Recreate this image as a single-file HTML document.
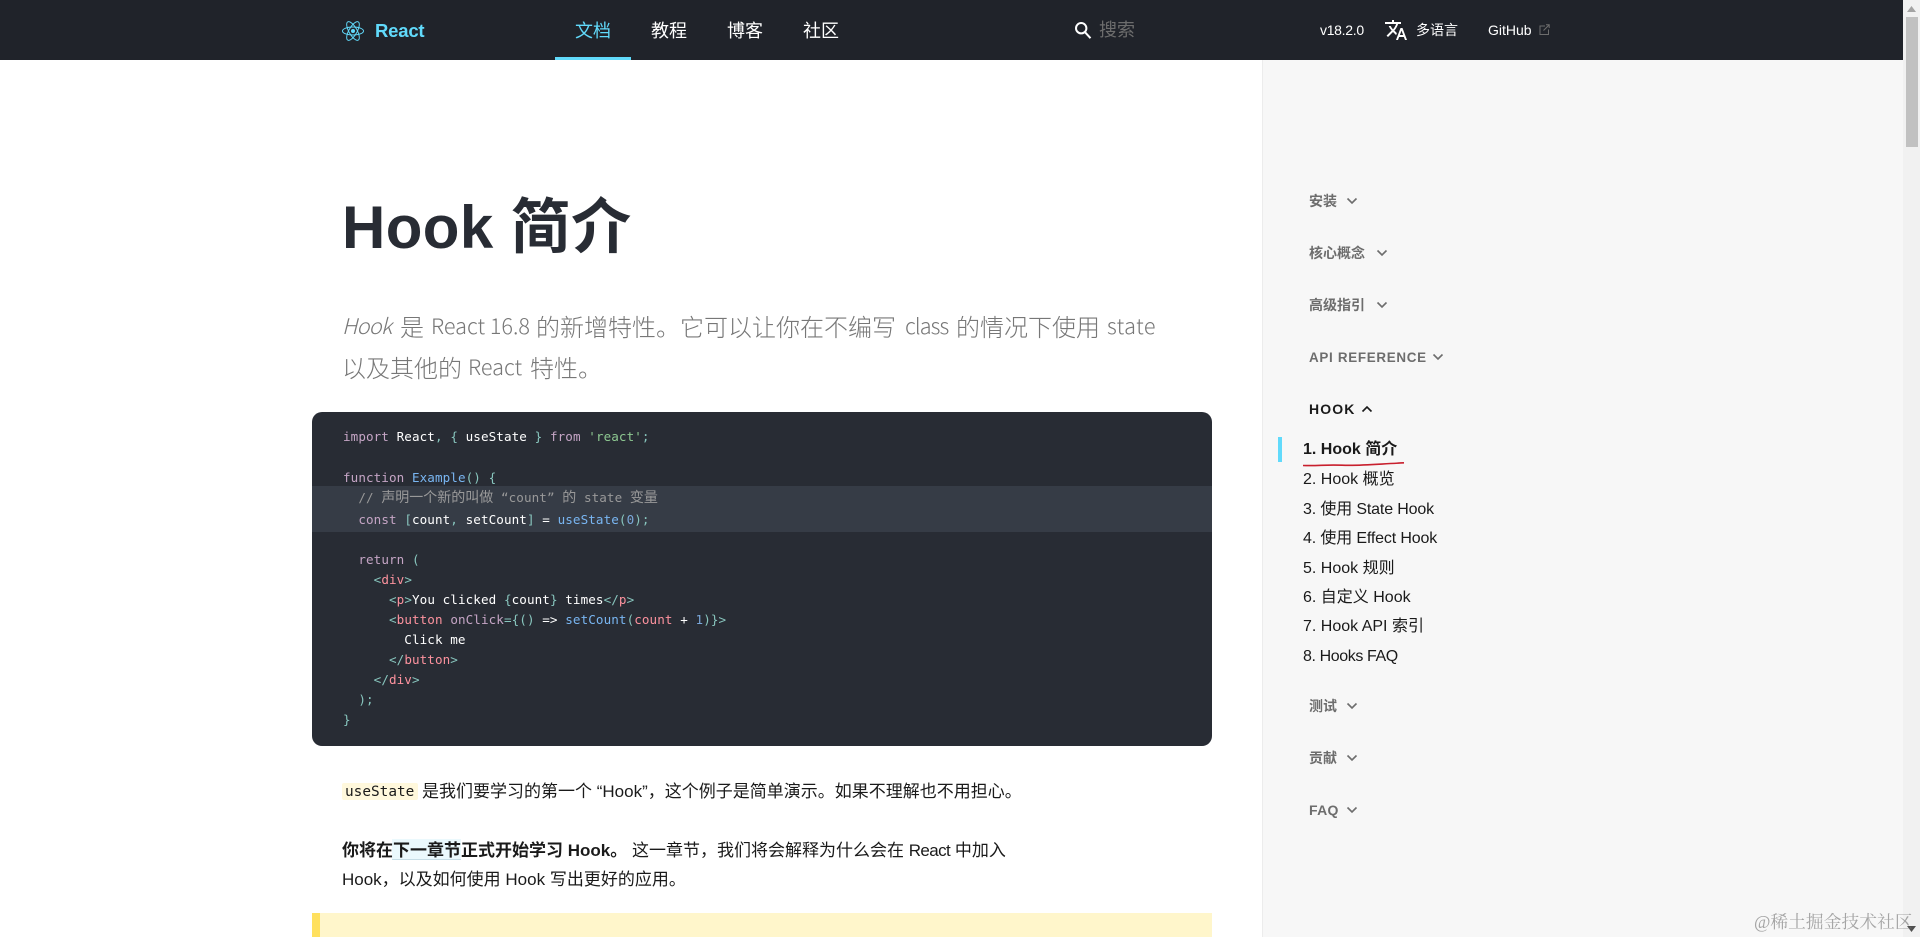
<!DOCTYPE html>
<html lang="zh-CN">
<head>
<meta charset="utf-8">
<title>Hook 简介 – React</title>
<style>
html,body{margin:0;padding:0;width:1920px;height:937px;overflow:hidden;background:#fff}
body{position:relative;font-family:"Liberation Sans","Noto Sans CJK SC",sans-serif;color:#1a1a1a}
.t{position:absolute;white-space:nowrap;line-height:30px;height:30px}
.nav{font-size:18px;color:#fff}
.s{font-size:14px;font-weight:700;color:#6d6d6d}
.i{font-size:16px;color:#1a1a1a;left:1303px}
.lead{font-family:"Noto Sans CJK SC","Liberation Sans",sans-serif;font-size:24px;font-weight:300;color:#777}
.ll{font-size:21.600px}
.c{position:absolute;left:343px;white-space:pre;line-height:20px;height:20px;font-family:"DejaVu Sans Mono","Liberation Mono","Noto Sans CJK SC",monospace;font-size:12.6px;letter-spacing:.08px;color:#fff}
.c .z{font-family:"Noto Sans CJK SC",sans-serif;font-size:14px;letter-spacing:0}
.k{color:#c5a5c5}.p{color:#88c6be}.g{color:#8dc891}.f{color:#79b6f2}.m{color:#999}.r{color:#fc929e}.n{color:#7aa7d9}
svg{position:absolute;display:block}
.chev{fill:none;stroke:#6d6d6d;stroke-width:1.6}
</style>
</head>
<body>
<!-- main regions -->
<div style="position:absolute;left:1262px;top:60px;width:641px;height:877px;background:#f7f7f7;border-left:1px solid #ececec;box-sizing:border-box"></div>
<div style="position:absolute;left:0;top:0;width:1903px;height:60px;background:#20232a"></div>

<!-- scrollbar -->
<div style="position:absolute;left:1903px;top:0;width:17px;height:937px;background:#f1f1f1"></div>
<div style="position:absolute;left:1906px;top:17px;width:12px;height:130px;background:#c1c1c1"></div>
<svg style="left:1906px;top:5px" width="11" height="8"><path d="M5.500 1L10 7H1z" fill="#a3a3a3"/></svg>
<svg style="left:1906px;top:925px" width="11" height="8"><path d="M5.500 7L10 1H1z" fill="#505050"/></svg>

<!-- header -->
<svg style="left:342px;top:20px" width="22" height="22" viewBox="-11.500 -11.500 23 23" fill="none" stroke="#61dafb" stroke-width="1">
<circle r="2.100" fill="#61dafb" stroke="none"/>
<ellipse rx="11" ry="4.200"/><ellipse rx="11" ry="4.200" transform="rotate(60)"/><ellipse rx="11" ry="4.200" transform="rotate(120)"/>
</svg>
<div class="t" style="left:375px;top:16px;font-size:18.500px;font-weight:700;letter-spacing:-.2px;color:#61dafb">React</div>
<div class="t nav" style="left:575px;top:16px;color:#61dafb">文档</div>
<div class="t nav" style="left:651px;top:16px">教程</div>
<div class="t nav" style="left:727px;top:16px">博客</div>
<div class="t nav" style="left:803px;top:16px">社区</div>
<div style="position:absolute;left:555px;top:57px;width:76px;height:3px;background:#61dafb"></div>
<svg style="left:1074px;top:21px" width="18" height="18" viewBox="0 0 18 18" fill="none" stroke="#fff" stroke-width="2"><circle cx="7.200" cy="7.200" r="5.200"/><path d="M11 11.200l5.500 6"/></svg>
<div class="t" style="left:1099px;top:15px;font-size:18px;color:#6d6d6d">搜索</div>
<div class="t" style="left:1320px;top:15px;font-size:14px;letter-spacing:-.3px;color:#fff">v18.2.0</div>
<svg style="left:1384px;top:18px" width="24" height="24" viewBox="0 0 24 24" fill="#fff"><path d="M12.870 15.070l-2.540-2.510.03-.03c1.740-1.940 2.980-4.170 3.710-6.530H17V4h-7V2H8v2H1v1.990h11.170C11.500 7.920 10.440 9.750 9 11.350 8.070 10.320 7.300 9.190 6.690 8h-2c.73 1.630 1.730 3.170 2.980 4.560l-5.090 5.020L4 19l5-5 3.110 3.110.76-2.040zM18.500 10h-2L12 22h2l1.120-3h4.750L21 22h2l-4.500-12zm-2.620 7l1.620-4.330L19.120 17h-3.240z"/></svg>
<div class="t" style="left:1416px;top:15px;font-size:14px;color:#fff">多语言</div>
<div class="t" style="left:1488px;top:15px;font-size:14px;color:#fff">GitHub</div>
<svg style="left:1539px;top:24px" width="11" height="11" viewBox="0 0 11 11" fill="none" stroke="#6d6d6d" stroke-width="1"><path d="M6 2H1v8.500h8.500V5.500"/><path d="M4.500 6.500L10 1M7 .8h3.200V4"/></svg>

<!-- title and lead -->
<div class="t" style="left:342px;top:193px;font-size:60px;line-height:70px;height:70px;font-weight:700;letter-spacing:.4px;color:#282c34">Hook 简介</div>
<div class="t lead ll" style="left:342px;top:311px;letter-spacing:-.7px"><i>Hook</i></div>
<div class="t lead" style="left:400px;top:311px">是</div>
<div class="t lead ll" style="left:431px;top:311px">React 16.8</div>
<div class="t lead" style="left:536px;top:311px">的新增特性。它可以让你在不编写</div>
<div class="t lead ll" style="left:905px;top:311px;letter-spacing:-.9px">class</div>
<div class="t lead" style="left:956px;top:311px">的情况下使用</div>
<div class="t lead ll" style="left:1107px;top:311px;letter-spacing:.4px">state</div>
<div class="t lead" style="left:342px;top:352px">以及其他的</div>
<div class="t lead ll" style="left:468px;top:352px">React</div>
<div class="t lead" style="left:530px;top:352px">特性。</div>

<!-- code -->
<div style="position:absolute;left:312px;top:412px;width:900px;height:334px;background:#282c34;border-radius:10px"></div>
<div style="position:absolute;left:312px;top:486px;width:900px;height:46px;background:#363c46"></div>
<div class="c" style="top:427px"><span class="k">import</span> React<span class="p">,</span> <span class="p">{</span> useState <span class="p">}</span> <span class="k">from</span> <span class="g">'react'</span><span class="p">;</span></div>
<div class="c" style="top:468px"><span class="k">function</span> <span class="f">Example</span><span class="p">()</span> <span class="p">{</span></div>
<div class="c m" style="top:487px;color:#999">  // <span class="z">声明一个新的叫做</span> “count” <span class="z">的</span> state <span class="z">变量</span></div>
<div class="c" style="top:510px">  <span class="k">const</span> <span class="p">[</span>count<span class="p">,</span> setCount<span class="p">]</span> = <span class="f">useState</span><span class="p">(</span><span class="n">0</span><span class="p">);</span></div>
<div class="c" style="top:550px">  <span class="k">return</span> <span class="p">(</span></div>
<div class="c" style="top:570px">    <span class="p">&lt;</span><span class="r">div</span><span class="p">&gt;</span></div>
<div class="c" style="top:590px">      <span class="p">&lt;</span><span class="r">p</span><span class="p">&gt;</span>You clicked <span class="p">{</span>count<span class="p">}</span> times<span class="p">&lt;/</span><span class="r">p</span><span class="p">&gt;</span></div>
<div class="c" style="top:610px">      <span class="p">&lt;</span><span class="r">button</span> <span class="k">onClick</span><span class="p">={()</span> =&gt; <span class="f">setCount</span><span class="p">(</span><span class="r">count</span> + <span class="n">1</span><span class="p">)}&gt;</span></div>
<div class="c" style="top:630px">        Click me</div>
<div class="c" style="top:650px">      <span class="p">&lt;/</span><span class="r">button</span><span class="p">&gt;</span></div>
<div class="c" style="top:670px">    <span class="p">&lt;/</span><span class="r">div</span><span class="p">&gt;</span></div>
<div class="c" style="top:690px">  <span class="p">);</span></div>
<div class="c" style="top:710px"><span class="p">}</span></div>

<!-- paragraphs -->
<div style="position:absolute;left:342px;top:783px;width:76px;height:17px;background:#fff8dc;border-radius:2px"></div>
<div class="c" style="left:345px;top:782px;color:#1a1a1a;font-size:14.400px;letter-spacing:0">useState</div>
<div class="t" style="left:422px;top:777px;font-size:17px">是我们要学习的第一个 “Hook”，这个例子是简单演示。如果不理解也不用担心。</div>
<div style="position:absolute;left:392px;top:839px;width:69px;height:21px;background:#ebf9fd;border-bottom:1px solid #c6dde6;box-sizing:border-box"></div>
<div class="t" style="left:342px;top:836px;font-size:17px"><b>你将在下一章节正式开始学习 Hook。</b> 这一章节，我们将会解释为什么会在 <span style="letter-spacing:-.6px">React</span> 中加入</div>
<div class="t" style="left:342px;top:865px;font-size:17px">Hook，以及如何使用 Hook 写出更好的应用。</div>
<div style="position:absolute;left:312px;top:913px;width:900px;height:24px;background:#fff6cb;border-left:8px solid #ffe05e;box-sizing:border-box"></div>

<!-- sidebar -->
<div class="t s" style="left:1309px;top:186px">安装</div>
<svg style="left:1346px;top:197px" width="12" height="8"><path class="chev" d="M1.500 1.500L6 6l4.500-4.500"/></svg>
<div class="t s" style="left:1309px;top:238px">核心概念</div>
<svg style="left:1376px;top:249px" width="12" height="8"><path class="chev" d="M1.500 1.500L6 6l4.500-4.500"/></svg>
<div class="t s" style="left:1309px;top:290px">高级指引</div>
<svg style="left:1376px;top:301px" width="12" height="8"><path class="chev" d="M1.500 1.500L6 6l4.500-4.500"/></svg>
<div class="t s" style="left:1309px;top:343px;font-size:13.400px;letter-spacing:.7px">API REFERENCE</div>
<svg style="left:1432px;top:353px" width="12" height="8"><path class="chev" d="M1.500 1.500L6 6l4.500-4.500"/></svg>
<div class="t s" style="left:1309px;top:394px;letter-spacing:1.100px;color:#1a1a1a">HOOK</div>
<svg style="left:1361px;top:405px" width="12" height="8"><path class="chev" style="stroke:#1a1a1a" d="M1.500 6.500L6 2l4.500 4.500"/></svg>
<div style="position:absolute;left:1278px;top:437px;width:4px;height:25px;background:#61dafb"></div>
<div class="t i" style="top:435px;font-weight:700">1. Hook 简介</div>
<svg style="left:1302px;top:460px" width="103" height="7"><path d="M1 5.500C18 6 22 4.500 40 5.200S70 4.500 102 2.800" fill="none" stroke="#c81f2d" stroke-width="1.600"/></svg>
<div class="t i" style="top:465px">2. Hook 概览</div>
<div class="t i" style="top:495px;letter-spacing:-.15px">3. 使用 State Hook</div>
<div class="t i" style="top:524px;letter-spacing:-.15px">4. 使用 Effect Hook</div>
<div class="t i" style="top:554px">5. Hook 规则</div>
<div class="t i" style="top:583px">6. 自定义 Hook</div>
<div class="t i" style="top:612px">7. Hook API 索引</div>
<div class="t i" style="top:642px;letter-spacing:-.4px">8. Hooks FAQ</div>
<div class="t s" style="left:1309px;top:691px">测试</div>
<svg style="left:1346px;top:702px" width="12" height="8"><path class="chev" d="M1.500 1.500L6 6l4.500-4.500"/></svg>
<div class="t s" style="left:1309px;top:743px">贡献</div>
<svg style="left:1346px;top:754px" width="12" height="8"><path class="chev" d="M1.500 1.500L6 6l4.500-4.500"/></svg>
<div class="t s" style="left:1309px;top:795px;letter-spacing:.3px">FAQ</div>
<svg style="left:1346px;top:806px" width="12" height="8"><path class="chev" d="M1.500 1.500L6 6l4.500-4.500"/></svg>

<!-- watermark -->
<div class="t" style="left:1754px;top:907px;font-size:17.800px;font-family:'Liberation Serif','Noto Serif CJK SC',serif;color:rgba(110,110,110,.6)">@稀土掘金技术社区</div>
</body>
</html>
